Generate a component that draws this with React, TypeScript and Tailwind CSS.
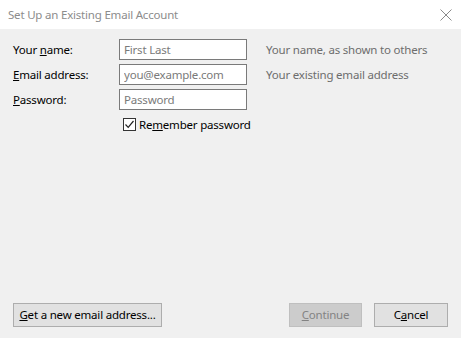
import { useState } from "react";

const font = { fontFamily: '"Noto Sans", "Open Sans", sans-serif' };

function Field({ placeholder, type = "text" }: { placeholder: string; type?: string }) {
  return (
    <input
      type={type}
      placeholder={placeholder}
      className="h-[21px] w-[128px] border border-[#7a7a7a] bg-white px-[4px] text-[11.5px] tracking-[-0.2px] text-black outline-none placeholder:text-[#7a7a7a]"
      style={font}
    />
  );
}

export default function App() {
  const [remember, setRemember] = useState(true);

  return (
    <div className="flex h-[338px] w-[461px] flex-col bg-[#f0f0f0] text-[11.5px] tracking-[-0.2px] text-black" style={font}>
      {/* title bar */}
      <div className="flex h-[29px] shrink-0 items-center justify-between bg-white pl-[8px] pr-[9px]">
        <span className="text-[#8c8c8c]">Set Up an Existing Email Account</span>
        <svg width="12" height="12" viewBox="0 0 12 12" className="text-[#8a8a8a]">
          <path d="M0.5 0.5 L11.5 11.5 M11.5 0.5 L0.5 11.5" stroke="currentColor" strokeWidth="1" fill="none" />
        </svg>
      </div>

      {/* form */}
      <div className="flex flex-1 flex-col pl-[13px] pr-[13px] pt-[10px]">
        <div className="grid grid-cols-[106px_128px_1fr] gap-y-[4px] items-center">
          <span>Your <u>n</u>ame:</span>
          <Field placeholder="First Last" />
          <span className="pl-[19px] text-[#6d6d6d]">Your name, as shown to others</span>

          <span><u>E</u>mail address:</span>
          <Field placeholder="you@example.com" />
          <span className="pl-[19px] text-[#6d6d6d]">Your existing email address</span>

          <span><u>P</u>assword:</span>
          <Field placeholder="Password" type="password" />
          <span />
        </div>

        <label className="ml-[110px] mt-[6px] flex items-center gap-[3px]">
          <span
            onClick={() => setRemember(!remember)}
            className="flex h-[13px] w-[13px] items-center justify-center border border-[#333] bg-white"
          >
            {remember && (
              <svg width="11" height="11" viewBox="0 0 11 11">
                <path d="M1.5 5.5 L4.2 8.3 L9.5 2" stroke="#222" strokeWidth="1.2" fill="none" />
              </svg>
            )}
          </span>
          <span>Re<u>m</u>ember password</span>
        </label>

        <div className="flex-1" />

        {/* buttons */}
        <div className="mb-[11px] flex items-center whitespace-nowrap">
          <button className="h-[24px] w-[149px] border border-[#adadad] bg-[#e1e1e1]">
            <u>G</u>et a new email address...
          </button>
          <div className="flex-1" />
          <button disabled className="h-[24px] w-[73px] border border-[#bfbfbf] bg-[#cccccc] text-[#838383]">
            <u>C</u>ontinue
          </button>
          <button className="ml-[12px] h-[24px] w-[74px] border border-[#adadad] bg-[#e1e1e1]">
            C<u>a</u>ncel
          </button>
        </div>
      </div>
    </div>
  );
}
